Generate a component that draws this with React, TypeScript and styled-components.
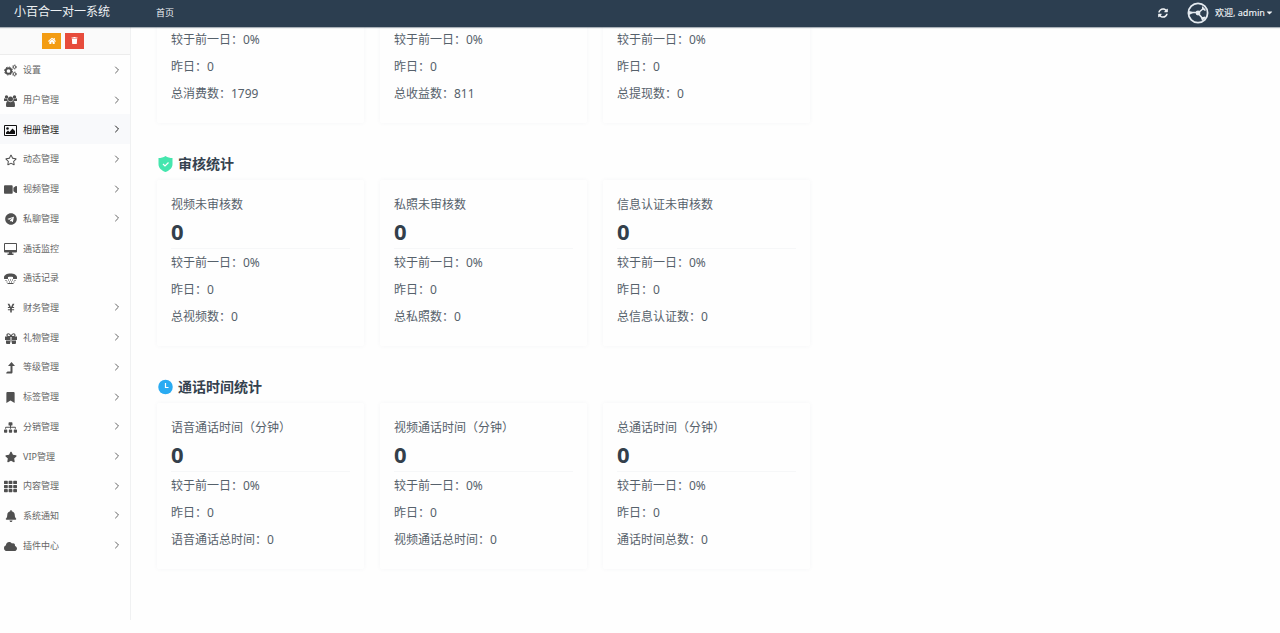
import React from 'react';
import styled, { createGlobalStyle, css } from 'styled-components';
import type { IconType } from 'react-icons';
import {
  FaBell, FaBookmark, FaCaretDown, FaCloud, FaHome, FaRegStar,
  FaSitemap, FaStar, FaSyncAlt, FaTelegram, FaTh, FaTrash, FaVideo, FaYenSign,
} from 'react-icons/fa';
import { ChevronRight } from 'lucide-react';

const GlobalStyle = createGlobalStyle`
  *, *::before, *::after { box-sizing: border-box; }
  body {
    margin: 0;
    background: #fefefe;
    color: #56616b;
    font-family: "Noto Sans", "Noto Sans CJK SC", sans-serif;
    font-size: 12px;
  }
  a { color: inherit; text-decoration: none; }
  button { font: inherit; color: inherit; border: 0; padding: 0; background: none; cursor: pointer; }
  h2, p { margin: 0; font-weight: 400; }
`;

const Page = styled.div`
  display: flex;
  flex-direction: column;
  min-height: 100vh;
  padding-bottom: 13px;
`;

const Header = styled.header`
  position: sticky;
  top: 0;
  z-index: 2;
  display: flex;
  align-items: center;
  height: 27px;
  flex: none;
  padding: 0 6px 0 14px;
  background: #2c3e50;
  color: #eef1f4;
  box-shadow: 0 1px 1px rgba(44, 62, 80, 0.4);
`;

const Brand = styled.a`
  width: 142px;
  font-size: 12px;
  line-height: 24px;
  padding-bottom: 3px;
`;

const TopTab = styled.a`
  font-size: 9px;
  line-height: 24px;
  padding-bottom: 2px;
`;

const HeaderTools = styled.div`
  display: flex;
  align-items: center;
  margin-left: auto;
  font-size: 9px;
  padding-bottom: 2px;
`;

const RefreshButton = styled.button`
  display: flex;
  margin-right: 19px;
`;

const UserButton = styled.button`
  display: flex;
  align-items: center;
  font-weight: 500;
  svg:first-child { margin-right: 6px; }
`;

const Body = styled.div`
  display: flex;
  flex: 1;
`;

const Sidebar = styled.aside`
  width: 131px;
  flex: none;
  border-right: 1px solid #f0f1f2;
`;

const QuickBar = styled.div`
  display: flex;
  justify-content: center;
  align-items: center;
  gap: 4px;
  height: 28px;
  padding-right: 4px;
  background: #fafafa;
  border-bottom: 1px solid #ececec;
`;

const QuickButton = styled.button<{ $color: string }>`
  display: flex;
  align-items: center;
  justify-content: center;
  width: 19px;
  height: 16px;
  background: ${(p) => p.$color};
  color: #fff;
`;

const Nav = styled.nav`
  display: grid;
  grid-auto-rows: 1fr;
  min-height: 505px;
`;

const NavLink = styled.a<{ $active?: boolean }>`
  display: flex;
  align-items: center;
  padding: 0 7px 0 4px;
  font-size: 9px;
  color: #666;
  ${(p) => p.$active && css`
    background: #f8f9fb;
    color: #222;
  `}
`;

const NavIcon = styled.span<{ $active?: boolean }>`
  display: flex;
  justify-content: center;
  width: 13px;
  margin-right: 6px;
  padding-top: 2px;
  color: ${(p) => (p.$active ? '#111' : '#505050')};
`;

const NavLabel = styled.span`
  flex: 1;
`;

const Main = styled.main`
  flex: 1;
  min-width: 0;
  padding: 0 26px;
`;

const Section = styled.section`
  margin-bottom: 29px;
`;

const SectionTitle = styled.h2`
  display: flex;
  align-items: center;
  gap: 5px;
  margin-bottom: 4px;
  padding-left: 1px;
  font-size: 14px;
  font-weight: 700;
  line-height: 24px;
  color: #35424f;
`;

const CardGrid = styled.div`
  display: grid;
  grid-template-columns: repeat(auto-fill, 207px);
  gap: 16px;
  max-width: 660px;
`;

const Card = styled.article<{ $continued?: boolean }>`
  padding: 11px 14px 16px;
  border-radius: 2px;
  background: #fefefe;
  box-shadow: 0 0 4px rgba(60, 80, 100, 0.05);
  line-height: 27px;
  white-space: nowrap;
  ${(p) => p.$continued && css`
    margin-top: -1px;
    padding-top: 0;
  `}
`;

const CardValue = styled.p`
  margin-bottom: 4px;
  font-size: 22px;
  font-weight: 700;
  line-height: 26px;
  color: #333f4b;
`;

const CardRows = styled.div<{ $divided?: boolean }>`
  border-top: ${(p) => (p.$divided ? '1px solid #f6f7f8' : '0')};
`;

const CogsIcon = () => (
  <svg width="13" height="13" viewBox="0 0 26 26" fill="none" stroke="currentColor" aria-hidden="true">
    <circle cx="9" cy="14" r="5.500" strokeWidth="3.600" />
    <circle cx="9" cy="14" r="8" strokeWidth="2" strokeDasharray="3.140 3.140" />
    <circle cx="21" cy="6" r="2.800" strokeWidth="2" />
    <circle cx="21" cy="6" r="4.400" strokeWidth="1.200" strokeDasharray="2.300 2.300" />
    <circle cx="21" cy="20" r="2.800" strokeWidth="2" />
    <circle cx="21" cy="20" r="4.400" strokeWidth="1.200" strokeDasharray="2.300 2.300" />
  </svg>
);

const GroupIcon = () => (
  <svg width="13" height="12" viewBox="0 0 26 24" fill="currentColor" aria-hidden="true">
    <circle cx="5" cy="4" r="3.400" />
    <circle cx="21" cy="4" r="3.400" />
    <circle cx="13" cy="8" r="5" />
    <path d="M0 12V9c0-2 1-3 2-2 2 1 4 1 5 0 0 2 0 4 1 5H0zM26 12V9c0-2-1-3-2-2-2 1-4 1-5 0 0 2 0 4-1 5h8z" />
    <path d="M4 21c0-5 1-9 4-9 3 3 7 3 10 0 3 0 4 4 4 9 0 2-1 3-3 3H7c-2 0-3-1-3-3z" />
  </svg>
);

const PictureIcon = () => (
  <svg width="13" height="11" viewBox="0 0 26 22" fill="currentColor" aria-hidden="true">
    <path fillRule="evenodd" d="M2 0h22a2 2 0 0 1 2 2v18a2 2 0 0 1-2 2H2a2 2 0 0 1-2-2V2a2 2 0 0 1 2-2zM2 2v18h22V2z" />
    <circle cx="7" cy="7" r="2.6" />
    <path d="M4 18v-3l4-4 3 3 6-7 5 5v6z" />
  </svg>
);

const MonitorIcon = () => (
  <svg width="13" height="12" viewBox="0 0 26 24" fill="currentColor" aria-hidden="true">
    <path fillRule="evenodd" d="M2 0h22a2 2 0 0 1 2 2v15a2 2 0 0 1-2 2h-8v2h3v3H7v-3h3v-2H2a2 2 0 0 1-2-2V2a2 2 0 0 1 2-2zM2 2v12h22V2z" />
  </svg>
);

const PhoneIcon = () => (
  <svg width="13" height="11" viewBox="0 0 26 22" fill="currentColor" aria-hidden="true">
    <path d="M0 9c0-5 6-8 13-8s13 3 13 8v2c0 1-1 1-2 1h-4c-1 0-2 0-2-1V8c-3-1-7-1-10 0v3c0 1-1 1-2 1H2c-1 0-2 0-2-1z" />
    <path d="M3 14h2v2H3zM8 13h2v2H8zM12 13h2v2h-2zM16 13h2v2h-2zM21 14h2v2h-2zM5 17h2v2H5zM10 17h2v2h-2zM14 17h2v2h-2zM19 17h2v2h-2zM7 20h12v2H7z" />
  </svg>
);

const GiftIcon = () => (
  <svg width="12" height="11" viewBox="0 0 24 22" fill="currentColor" aria-hidden="true">
    <path d="M0 7h10v7H0zM14 7h10v7H14zM2 15h8v7H4a2 2 0 0 1-2-2zM14 15h8v5a2 2 0 0 1-2 2h-6zM11 9h2v10h-2z" />
    <path d="M12 7H7C3 7 3 1.500 7 1.500c3 0 4 3 5 5.500 1-2.500 2-5.500 5-5.500 4 0 4 5.500 0 5.500z" fill="none" stroke="currentColor" strokeWidth="2.400" />
  </svg>
);

const LevelUpIcon = () => (
  <svg width="9" height="12" viewBox="0 0 18 24" fill="currentColor" aria-hidden="true">
    <path d="M11 0l7 8h-5v12c0 2-1 3-3 3H1l-1-1 3-3h6V8H4z" />
  </svg>
);

const AvatarIcon = () => (
  <svg width="22" height="22" viewBox="0 0 22 22" aria-hidden="true">
    <circle cx="11" cy="11" r="9.6" fill="none" stroke="#e4eaf0" strokeWidth="1.8" />
    <path d="M2 10.500h8M11 11l6-5M11 11l5 6" stroke="#e4eaf0" strokeWidth="1.6" />
    <circle cx="11" cy="11" r="2.4" fill="#e4eaf0" />
    <path d="M2 9l5 1.500L2 13zM15 4l4 4-1 1-3-2zM14 15.500l4-1 .5 1.500L15 19z" fill="#e4eaf0" />
  </svg>
);

const ShieldIcon = () => (
  <svg width="15" height="16" viewBox="0 0 30 32" aria-hidden="true">
    <path d="M15 0c4 3 9 4 14 4v12c0 8-6 13-14 16C7 29 1 24 1 16V4c5 0 10-1 14-4z" fill="#45e6ae" />
    <path d="M10 16l4 4 7-7" fill="none" stroke="#fff" strokeWidth="2.400" />
  </svg>
);

const ClockIcon = () => (
  <svg width="15" height="16" viewBox="0 0 30 32" aria-hidden="true">
    <circle cx="15" cy="16" r="14.500" fill="#2aabf2" />
    <path d="M15 8v9h6" fill="none" stroke="#fff" strokeWidth="2.400" />
  </svg>
);

interface NavEntry {
  label: string;
  Icon: IconType | (() => React.JSX.Element);
  leaf?: boolean;
  active?: boolean;
}

const navEntries: NavEntry[] = [
  { label: '设置', Icon: CogsIcon },
  { label: '用户管理', Icon: GroupIcon },
  { label: '相册管理', Icon: PictureIcon, active: true },
  { label: '动态管理', Icon: FaRegStar },
  { label: '视频管理', Icon: FaVideo },
  { label: '私聊管理', Icon: FaTelegram },
  { label: '通话监控', Icon: MonitorIcon, leaf: true },
  { label: '通话记录', Icon: PhoneIcon, leaf: true },
  { label: '财务管理', Icon: FaYenSign },
  { label: '礼物管理', Icon: GiftIcon },
  { label: '等级管理', Icon: LevelUpIcon },
  { label: '标签管理', Icon: FaBookmark },
  { label: '分销管理', Icon: FaSitemap },
  { label: 'VIP管理', Icon: FaStar },
  { label: '内容管理', Icon: FaTh },
  { label: '系统通知', Icon: FaBell },
  { label: '插件中心', Icon: FaCloud },
];

const iconSizes = new Map<NavEntry['Icon'], number>([
  [FaYenSign, 10],
  [FaBookmark, 11],
  [FaVideo, 13],
  [FaSitemap, 13],
  [FaTh, 13],
  [FaCloud, 13],
]);

interface Stat {
  label?: string;
  total: string;
  count: number;
}

const moneyStats: Stat[] = [
  { total: '总消费数', count: 1799 },
  { total: '总收益数', count: 811 },
  { total: '总提现数', count: 0 },
];

const reviewStats: Stat[] = [
  { label: '视频未审核数', total: '总视频数', count: 0 },
  { label: '私照未审核数', total: '总私照数', count: 0 },
  { label: '信息认证未审核数', total: '总信息认证数', count: 0 },
];

const callStats: Stat[] = [
  { label: '语音通话时间（分钟）', total: '语音通话总时间', count: 0 },
  { label: '视频通话时间（分钟）', total: '视频通话总时间', count: 0 },
  { label: '总通话时间（分钟）', total: '通话时间总数', count: 0 },
];

const StatCards = ({ stats }: { stats: Stat[] }) => (
  <CardGrid>
    {stats.map((s) => (
      <Card key={s.total} $continued={!s.label}>
        {s.label && (
          <>
            <p>{s.label}</p>
            <CardValue>0</CardValue>
          </>
        )}
        <CardRows $divided={!!s.label}>
          <p>较于前一日：0%</p>
          <p>昨日：0</p>
          <p>{`${s.total}：${s.count}`}</p>
        </CardRows>
      </Card>
    ))}
  </CardGrid>
);

export default function App() {
  return (
    <>
      <GlobalStyle />
      <Page>
        <Header>
          <Brand href="#">小百合一对一系统</Brand>
          <TopTab href="#">首页</TopTab>
          <HeaderTools>
            <RefreshButton type="button" aria-label="刷新"><FaSyncAlt size={10} /></RefreshButton>
            <UserButton type="button">
              <AvatarIcon />
              <span>欢迎, admin</span>
              <FaCaretDown size={9} />
            </UserButton>
          </HeaderTools>
        </Header>
        <Body>
          <Sidebar>
            <QuickBar>
              <QuickButton type="button" $color="#f39c12" aria-label="主页"><FaHome size={8} /></QuickButton>
              <QuickButton type="button" $color="#e74c3c" aria-label="清除"><FaTrash size={7} /></QuickButton>
            </QuickBar>
            <Nav>
              {navEntries.map(({ label, Icon, leaf, active }) => (
                <NavLink key={label} href="#" $active={active}>
                  <NavIcon $active={active}><Icon size={iconSizes.get(Icon) ?? 12} /></NavIcon>
                  <NavLabel>{label}</NavLabel>
                  {!leaf && <ChevronRight size={12} strokeWidth={2} />}
                </NavLink>
              ))}
            </Nav>
          </Sidebar>
          <Main>
            <Section>
              <StatCards stats={moneyStats} />
            </Section>
            <Section>
              <SectionTitle><ShieldIcon />审核统计</SectionTitle>
              <StatCards stats={reviewStats} />
            </Section>
            <Section>
              <SectionTitle><ClockIcon />通话时间统计</SectionTitle>
              <StatCards stats={callStats} />
            </Section>
          </Main>
        </Body>
      </Page>
    </>
  );
}
